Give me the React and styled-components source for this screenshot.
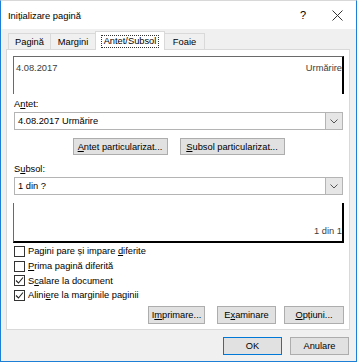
import React from 'react'
import styled, { createGlobalStyle } from 'styled-components'

const Global = createGlobalStyle`
  html, body { margin: 0; padding: 0; background: #fff; }
  body {
    font-family: "Liberation Sans", Arial, sans-serif;
    font-size: 9.3px;
    color: #000;
  }
  * { box-sizing: border-box; }
`

const Window = styled.div`
  width: 357px;
  height: 362px;
  display: flex;
  flex-direction: column;
  border: 1px solid #1d7fd6;
  border-top-color: #d8d8d8;
  background: #f0f0f0;
`
const TitleBar = styled.div`
  height: 28px;
  flex: none;
  display: flex;
  align-items: center;
  padding-left: 7px;
  background: #fff;
`
const Title = styled.div`
  flex: 1;
  font-size: 9.4px;
`
const HelpGlyph = styled.div`
  width: 14px;
  margin-right: 22px;
  font-size: 11px;
  text-align: center;
`
const CloseGlyph = styled.svg`
  margin-right: 13px;
`
const Body = styled.div`
  flex: 1;
  display: flex;
  flex-direction: column;
  padding: 3px 6px 0 5px;
`
const TabStrip = styled.div`
  display: flex;
  align-items: flex-end;
  height: 17px;
  padding-left: 2px;
  position: relative;
  z-index: 1;
`
const Tab = styled.div`
  width: ${p => p.w}px;
  height: ${p => (p.active ? 19 : 16)}px;
  margin-right: -1px;
  margin-bottom: ${p => (p.active ? -1 : 0)}px;
  display: flex;
  align-items: center;
  justify-content: center;
  border: 1px solid #d9d9d9;
  border-bottom: none;
  background: ${p => (p.active ? '#fff' : '#f0f0f0')};
  position: relative;
  z-index: ${p => (p.active ? 2 : 1)};
`
const FocusLabel = styled.span`
  border: 1px dotted #333;
  padding: 0 2px;
  line-height: 11px;
`
const Panel = styled.div`
  height: 281px;
  flex: none;
  display: flex;
  flex-direction: column;
  background: #fff;
  border: 1px solid #d9d9d9;
  padding: 6px 5px 5px 6px;
`
const Preview = styled.div`
  height: ${p => p.h}px;
  display: flex;
  justify-content: space-between;
  align-items: ${p => (p.bottom ? 'flex-end' : 'flex-start')};
  border-left: 1px solid #6a6a6a;
  border-right: 2px solid #000;
  border-top: ${p => (p.bottom ? 'none' : '1px solid #6a6a6a')};
  border-bottom: ${p => (p.bottom ? '2px solid #000' : 'none')};
  padding: ${p => (p.bottom ? '0 0 4px 3px' : '5px 0 0 2px')};
  margin-top: ${p => p.mt || 0}px;
  color: #3c3c3c;
  line-height: 12px;
`
const Label = styled.div`
  line-height: 12px;
  margin: ${p => p.mt}px 0 2px 1px;
`
const Key = styled.span`
  text-decoration: underline;
  text-underline-offset: 1px;
`
const Select = styled.div`
  height: 18px;
  margin: 0 1px;
  display: flex;
  align-items: center;
  border: 1px solid #b4b4b4;
  background: #fff;
`
const SelectText = styled.div`
  flex: 1;
  padding-left: 3px;
`
const DropButton = styled.div`
  width: 17px;
  height: 16px;
  display: flex;
  align-items: center;
  justify-content: center;
  background: #e6e6e6;
  border-left: 1px solid #b4b4b4;
`
const CenterRow = styled.div`
  display: flex;
  justify-content: center;
  gap: 12px;
  margin-top: 8px;
`
const Button = styled.div`
  width: ${p => p.w}px;
  height: ${p => p.h || 18}px;
  display: flex;
  align-items: center;
  justify-content: center;
  background: #e1e1e1;
  border: 1px solid ${p => (p.primary ? '#0078d7' : '#adadad')};
  margin-left: ${p => p.ml || 0}px;
`
const CheckList = styled.div`
  display: flex;
  flex-direction: column;
  margin-top: 1px;
  padding-left: 1px;
`
const CheckRow = styled.div`
  height: 14.7px;
  display: flex;
  align-items: center;
  gap: 3px;
`
const Box = styled.div`
  width: 11px;
  height: 11px;
  border: 1px solid #333;
  background: #fff;
  display: flex;
  align-items: center;
  justify-content: center;
`
const EndRow = styled.div`
  display: flex;
  justify-content: flex-end;
  margin-top: auto;
  padding-right: 0px;
`
const Footer = styled.div`
  display: flex;
  justify-content: flex-end;
  margin-top: 7px;
  padding-right: 1px;
`

const Chevron = () => (
  <svg width="8" height="5" viewBox="0 0 8 5">
    <path d="M0.5 0.5 L4 4 L7.5 0.5" fill="none" stroke="#555" strokeWidth="1" />
  </svg>
)

const Check = ({ checked, children }) => (
  <CheckRow>
    <Box>
      {checked && (
        <svg width="9" height="9" viewBox="0 0 9 9">
          <path d="M1 4.5 L3.5 7 L8 1.5" fill="none" stroke="#222" strokeWidth="1.1" />
        </svg>
      )}
    </Box>
    <span>{children}</span>
  </CheckRow>
)

export default function App() {
  return (
    <>
      <Global />
      <Window>
        <TitleBar>
          <Title>Inițializare pagină</Title>
          <HelpGlyph>?</HelpGlyph>
          <CloseGlyph width="11" height="11" viewBox="0 0 11 11">
            <path d="M0.5 0.5 L10.5 10.5 M10.5 0.5 L0.5 10.5" stroke="#333" strokeWidth="1" />
          </CloseGlyph>
        </TitleBar>
        <Body>
          <TabStrip>
            <Tab w={43}>Pagină</Tab>
            <Tab w={46}>Margini</Tab>
            <Tab w={70} active>
              <FocusLabel>Antet/Subsol</FocusLabel>
            </Tab>
            <Tab w={41}>Foaie</Tab>
          </TabStrip>
          <Panel>
            <Preview h={38}>
              <span>4.08.2017</span>
              <span>Urmărire</span>
            </Preview>
            <Label mt={4}>
              A<Key>n</Key>tet:
            </Label>
            <Select>
              <SelectText>4.08.2017 Urmărire</SelectText>
              <DropButton>
                <Chevron />
              </DropButton>
            </Select>
            <CenterRow>
              <Button w={95} h={17}>
                <Key>A</Key>ntet particularizat...
              </Button>
              <Button w={105} h={17}>
                <Key>S</Key>ubsol particularizat...
              </Button>
            </CenterRow>
            <Label mt={8}>
              S<Key>u</Key>bsol:
            </Label>
            <Select>
              <SelectText>1 din ?</SelectText>
              <DropButton>
                <Chevron />
              </DropButton>
            </Select>
            <Preview h={40} mt={8} bottom>
              <span />
              <span>1 din 1</span>
            </Preview>
            <CheckList>
              <Check>
                Pagini pare și impare <Key>d</Key>iferite
              </Check>
              <Check>
                <Key>P</Key>rima pagină diferită
              </Check>
              <Check checked>
                S<Key>c</Key>alare la document
              </Check>
              <Check checked>
                Alini<Key>e</Key>re la marginile paginii
              </Check>
            </CheckList>
            <EndRow>
              <Button w={57}>
                I<Key>m</Key>primare...
              </Button>
              <Button w={59} ml={12}>
                E<Key>x</Key>aminare
              </Button>
              <Button w={60} ml={8}>
                <Key>O</Key>pțiuni...
              </Button>
            </EndRow>
          </Panel>
          <Footer>
            <Button w={59} primary>
              OK
            </Button>
            <Button w={59} ml={8}>
              Anulare
            </Button>
          </Footer>
        </Body>
      </Window>
    </>
  )
}
